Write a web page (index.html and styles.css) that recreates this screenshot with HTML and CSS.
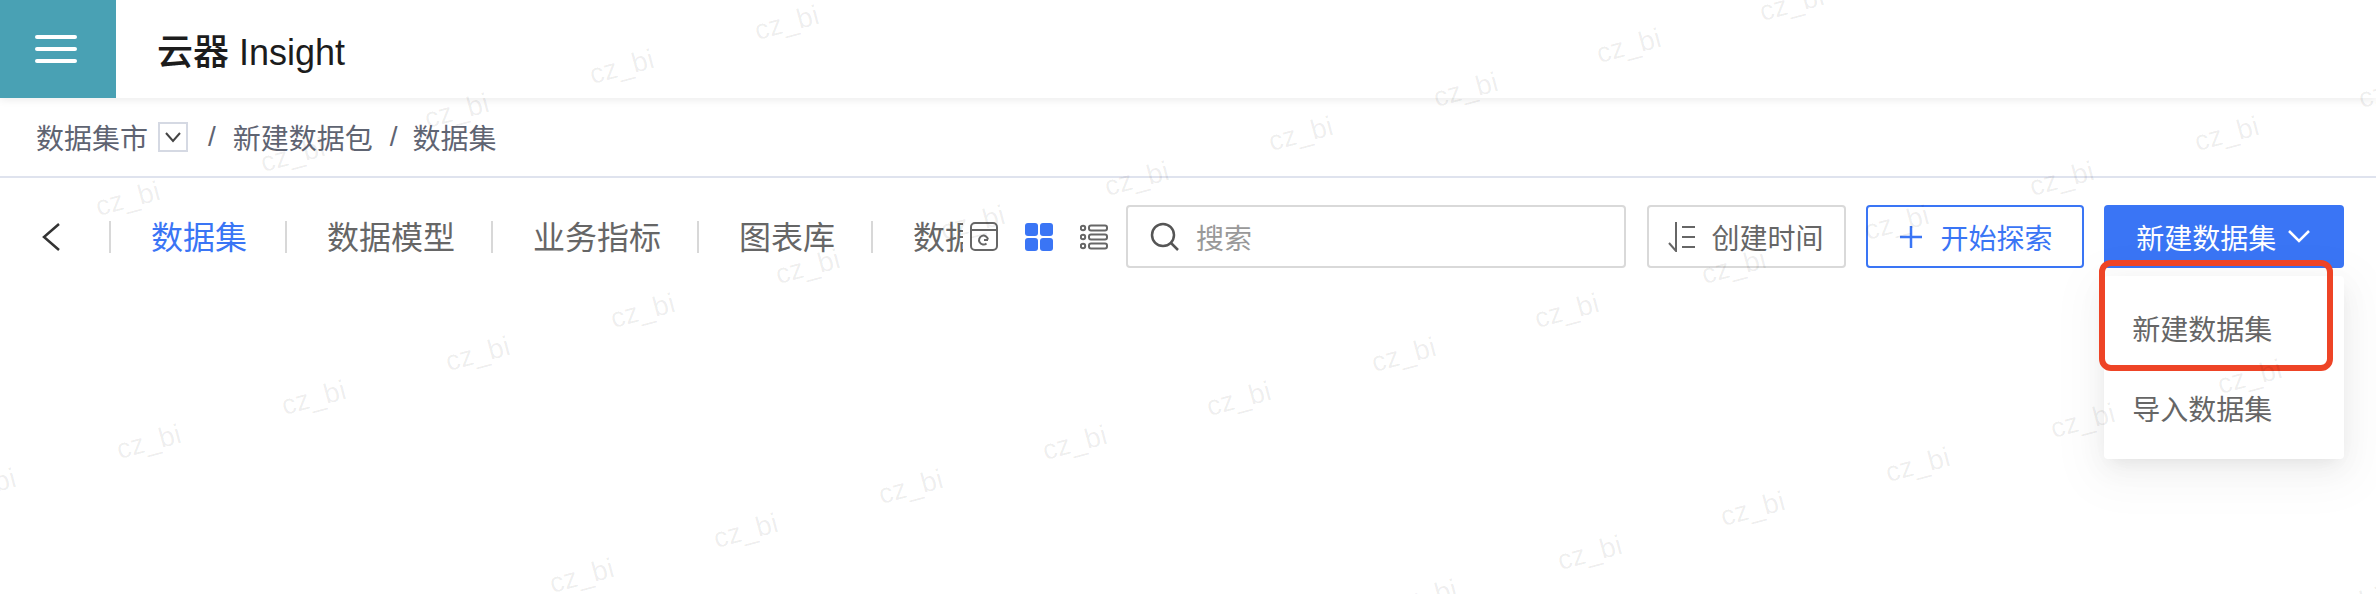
FILE: index.html
```html
<!DOCTYPE html>
<html lang="zh-CN">

<head>
  <meta charset="UTF-8">
  <title>云器 Insight</title>
  <link rel="stylesheet" href="styles.css">
</head>

<body>
  <header class="topbar">
    <div class="menu-btn">
      <span></span>
      <span></span>
      <span></span>
    </div>
    <div class="brand"><b>云器</b> Insight</div>
  </header>

  <nav class="crumbs">
    <span>数据集市</span>
    <span class="crumb-select">
      <svg width="18" height="12" viewBox="0 0 18 12"><path d="M2 2l7 8 7-8" /></svg>
    </span>
    <span class="crumb-sep first">/</span>
    <span>新建数据包</span>
    <span class="crumb-sep">/</span>
    <span>数据集</span>
  </nav>

  <section class="toolbar">
    <svg class="back" width="18" height="28" viewBox="0 0 18 28"><path d="M17 1L2 14l15 13" /></svg>

    <div class="tabs">
      <a class="tab active">数据集</a>
      <a class="tab">数据模型</a>
      <a class="tab">业务指标</a>
      <a class="tab">图表库</a>
      <a class="tab">数据大屏</a>
    </div>

    <div class="views">
      <svg width="28" height="29" viewBox="0 0 28 29" class="line-icon">
        <rect x="1" y="1" width="26" height="27" rx="4" />
        <path d="M1 8h26" />
        <path d="M18 17.5a4.5 4.5 0 1 0-1.5 4M14 18h4" />
      </svg>
      <svg width="28" height="28" viewBox="0 0 28 28" class="grid-icon">
        <rect x="0" y="0" width="13" height="13" rx="3" />
        <rect x="15" y="0" width="13" height="13" rx="3" />
        <rect x="0" y="15" width="13" height="13" rx="3" />
        <rect x="15" y="15" width="13" height="13" rx="3" />
      </svg>
      <svg width="28" height="26" viewBox="0 0 28 26" class="line-icon">
        <circle cx="3" cy="4" r="2.2" />
        <circle cx="3" cy="13" r="2.2" />
        <circle cx="3" cy="22" r="2.2" />
        <rect x="9" y="1.5" width="18" height="5" rx="2" />
        <rect x="9" y="10.5" width="18" height="5" rx="2" />
        <rect x="9" y="19.5" width="18" height="5" rx="2" />
      </svg>
    </div>

    <div class="search">
      <svg width="30" height="30" viewBox="0 0 30 30" class="search-icon">
        <circle cx="13" cy="13" r="11" />
        <path d="M21 21l7 7" />
      </svg>
      <span>搜索</span>
    </div>

    <div class="btn sort">
      <svg width="28" height="30" viewBox="0 0 28 30" class="line-icon">
        <path d="M1 21l7 8V0" />
        <path d="M14 5h13M14 15h13M14 25h13" />
      </svg>
      <span>创建时间</span>
    </div>

    <div class="btn outline">
      <svg width="22" height="22" viewBox="0 0 22 22"><path d="M11 0v22M0 11h22" /></svg>
      <span>开始探索</span>
    </div>

    <div class="create">
      <div class="btn primary">
        <span>新建数据集</span>
        <svg width="22" height="13" viewBox="0 0 22 13"><path d="M1 1l10 10L21 1" /></svg>
      </div>
      <ul class="dropdown">
        <li>新建数据集</li>
        <li>导入数据集</li>
      </ul>
      <div class="highlight"></div>
    </div>
  </section>

  <svg class="watermark" width="2376" height="594" viewBox="0 0 2376 594">
    <text x="787" y="32" transform="rotate(-15 787 24)">cz_bi</text>
    <text x="622" y="76" transform="rotate(-15 622 68)">cz_bi</text>
    <text x="457" y="120" transform="rotate(-15 457 112)">cz_bi</text>
    <text x="293" y="164" transform="rotate(-15 293 156)">cz_bi</text>
    <text x="128" y="208" transform="rotate(-15 128 200)">cz_bi</text>

    <text x="-16" y="495" transform="rotate(-15 -16 487)">cz_bi</text>
    <text x="149" y="451" transform="rotate(-15 149 443)">cz_bi</text>
    <text x="314" y="407" transform="rotate(-15 314 399)">cz_bi</text>
    <text x="478" y="363" transform="rotate(-15 478 355)">cz_bi</text>
    <text x="643" y="320" transform="rotate(-15 643 312)">cz_bi</text>
    <text x="808" y="276" transform="rotate(-15 808 268)">cz_bi</text>
    <text x="973" y="232" transform="rotate(-15 973 224)">cz_bi</text>
    <text x="1137" y="188" transform="rotate(-15 1137 180)">cz_bi</text>
    <text x="1301" y="143" transform="rotate(-15 1301 135)">cz_bi</text>
    <text x="1466" y="99" transform="rotate(-15 1466 91)">cz_bi</text>
    <text x="1629" y="55" transform="rotate(-15 1629 47)">cz_bi</text>
    <text x="1792" y="13" transform="rotate(-15 1792 5)">cz_bi</text>

    <text x="582" y="585" transform="rotate(-15 582 577)">cz_bi</text>
    <text x="746" y="540" transform="rotate(-15 746 532)">cz_bi</text>
    <text x="911" y="496" transform="rotate(-15 911 488)">cz_bi</text>
    <text x="1075" y="452" transform="rotate(-15 1075 444)">cz_bi</text>
    <text x="1239" y="408" transform="rotate(-15 1239 400)">cz_bi</text>
    <text x="1404" y="364" transform="rotate(-15 1404 356)">cz_bi</text>
    <text x="1567" y="320" transform="rotate(-15 1567 312)">cz_bi</text>
    <text x="1734" y="276" transform="rotate(-15 1734 268)">cz_bi</text>
    <text x="1897" y="232" transform="rotate(-15 1897 224)">cz_bi</text>
    <text x="2062" y="188" transform="rotate(-15 2062 180)">cz_bi</text>
    <text x="2227" y="143" transform="rotate(-15 2227 135)">cz_bi</text>
    <text x="2391" y="100" transform="rotate(-15 2391 92)">cz_bi</text>

    <text x="1425" y="606" transform="rotate(-15 1425 598)">cz_bi</text>
    <text x="1590" y="562" transform="rotate(-15 1590 554)">cz_bi</text>
    <text x="1753" y="518" transform="rotate(-15 1753 510)">cz_bi</text>
    <text x="1918" y="474" transform="rotate(-15 1918 466)">cz_bi</text>
    <text x="2083" y="430" transform="rotate(-15 2083 422)">cz_bi</text>
    <text x="2250" y="386" transform="rotate(-15 2250 378)">cz_bi</text>
    <text x="2415" y="342" transform="rotate(-15 2415 334)">cz_bi</text>

    <text x="2350" y="614" transform="rotate(-15 2350 606)">cz_bi</text>
  </svg>
</body>

</html>
```

FILE: styles.css
```css
* {
  box-sizing: border-box;
}

html,
body {
  height: 100%;
}

body {
  margin: 0;
  overflow: hidden;
  position: relative;
  background-color: #fff;
  font-family: "Liberation Sans", "Noto Sans CJK SC", sans-serif;
  color: #666;
}

/* top bar */
.topbar {
  display: flex;
  align-items: center;
  height: 98px;
  background-color: #fff;
  box-shadow: 0 2px 8px rgba(0, 0, 0, 0.08);
}

.menu-btn {
  display: flex;
  flex-direction: column;
  justify-content: center;
  gap: 8px;
  width: 116px;
  height: 98px;
  padding: 0 39px 0 35px;
  background-color: #49a1b4;
}

.menu-btn span {
  height: 4px;
  border-radius: 2px;
  background-color: #fff;
}

.brand {
  margin-left: 41px;
  font-size: 36px;
  color: #1c1c1c;
}

.brand b {
  font-weight: 500;
}

/* breadcrumb */
.crumbs {
  display: flex;
  align-items: center;
  height: 80px;
  padding-left: 36px;
  border-bottom: 2px solid #dfe3ee;
  font-size: 28px;
  color: #5f6472;
}

.crumb-select {
  display: flex;
  align-items: center;
  justify-content: center;
  width: 30px;
  height: 30px;
  margin-left: 10px;
  border: 2px solid #d5d9e3;
}

.crumb-select path {
  fill: none;
  stroke: #444;
  stroke-width: 2;
}

.crumb-sep {
  margin: 0 15px 0 17px;
}

.crumb-sep.first {
  margin: 0 17px 0 20px;
}

/* toolbar */
.toolbar {
  display: flex;
  align-items: center;
  padding: 27px 32px 0 42px;
}

.back {
  flex: none;
}

.back path {
  fill: none;
  stroke: #333;
  stroke-width: 2.5;
}

.tabs {
  display: flex;
  flex: none;
  width: 854px;
  margin-left: 49px;
  overflow: hidden;
}

/* divider is a background so the clip box can stay taller than it */
.tab {
  flex: none;
  height: 48px;
  padding: 0 36px 0 42px;
  background: linear-gradient(#d8d8d8, #d8d8d8) left center / 2px 32px no-repeat;
  font-size: 32px;
  line-height: 50px;
  color: #666;
}

.tab.active {
  padding-right: 38px;
  color: #3a75f5;
}

.views {
  display: flex;
  align-items: center;
  gap: 27px;
  margin-left: 7px;
}

.line-icon * {
  fill: none;
  stroke: #666;
  stroke-width: 2;
}

.grid-icon rect {
  fill: #3a75f5;
}

.search {
  display: flex;
  align-items: center;
  gap: 16px;
  width: 500px;
  height: 63px;
  margin-left: 18px;
  padding-left: 22px;
  border: 2px solid #d9d9d9;
  border-radius: 4px;
  font-size: 28px;
  color: #999;
}

.search-icon * {
  fill: none;
  stroke: #555;
  stroke-width: 2.5;
}

.btn {
  display: flex;
  align-items: center;
  height: 63px;
  border-radius: 4px;
  font-size: 28px;
  white-space: nowrap;
}

.sort {
  gap: 16px;
  width: 200px;
  margin-left: 21px;
  padding-left: 19px;
  border: 2px solid #d9d9d9;
}

.outline {
  gap: 18px;
  width: 218px;
  margin-left: 20px;
  padding-left: 32px;
  border: 2px solid #3a75f5;
  color: #3a75f5;
}

.outline path {
  fill: none;
  stroke: #3a75f5;
  stroke-width: 2.5;
}

.create {
  position: relative;
  width: 240px;
  margin-left: 20px;
}

.primary {
  gap: 12px;
  padding-left: 32px;
  background-color: #3a75f5;
  color: #fff;
}

.primary path {
  fill: none;
  stroke: #fff;
  stroke-width: 2.5;
}

.dropdown {
  position: absolute;
  top: 71px;
  left: 0;
  width: 240px;
  margin: 0;
  padding: 15px 0 8px;
  list-style: none;
  border-radius: 4px;
  background-color: #fff;
  box-shadow: 0 6px 16px -8px rgba(0, 0, 0, 0.08), 0 9px 28px rgba(0, 0, 0, 0.05), 0 12px 48px 16px rgba(0, 0, 0, 0.03);
  font-size: 28px;
}

.dropdown li {
  height: 80px;
  padding-left: 28px;
  line-height: 80px;
}

.highlight {
  position: absolute;
  top: 55px;
  left: -5px;
  width: 234px;
  height: 111px;
  border: 6px solid #ee4426;
  border-radius: 12px;
}

/* watermark over everything */
.watermark {
  position: absolute;
  top: 0;
  left: 0;
  pointer-events: none;
}

.watermark text {
  font-family: "Liberation Sans", sans-serif;
  font-size: 28px;
  text-anchor: middle;
  fill: rgba(0, 0, 0, 0.07);
}
```
